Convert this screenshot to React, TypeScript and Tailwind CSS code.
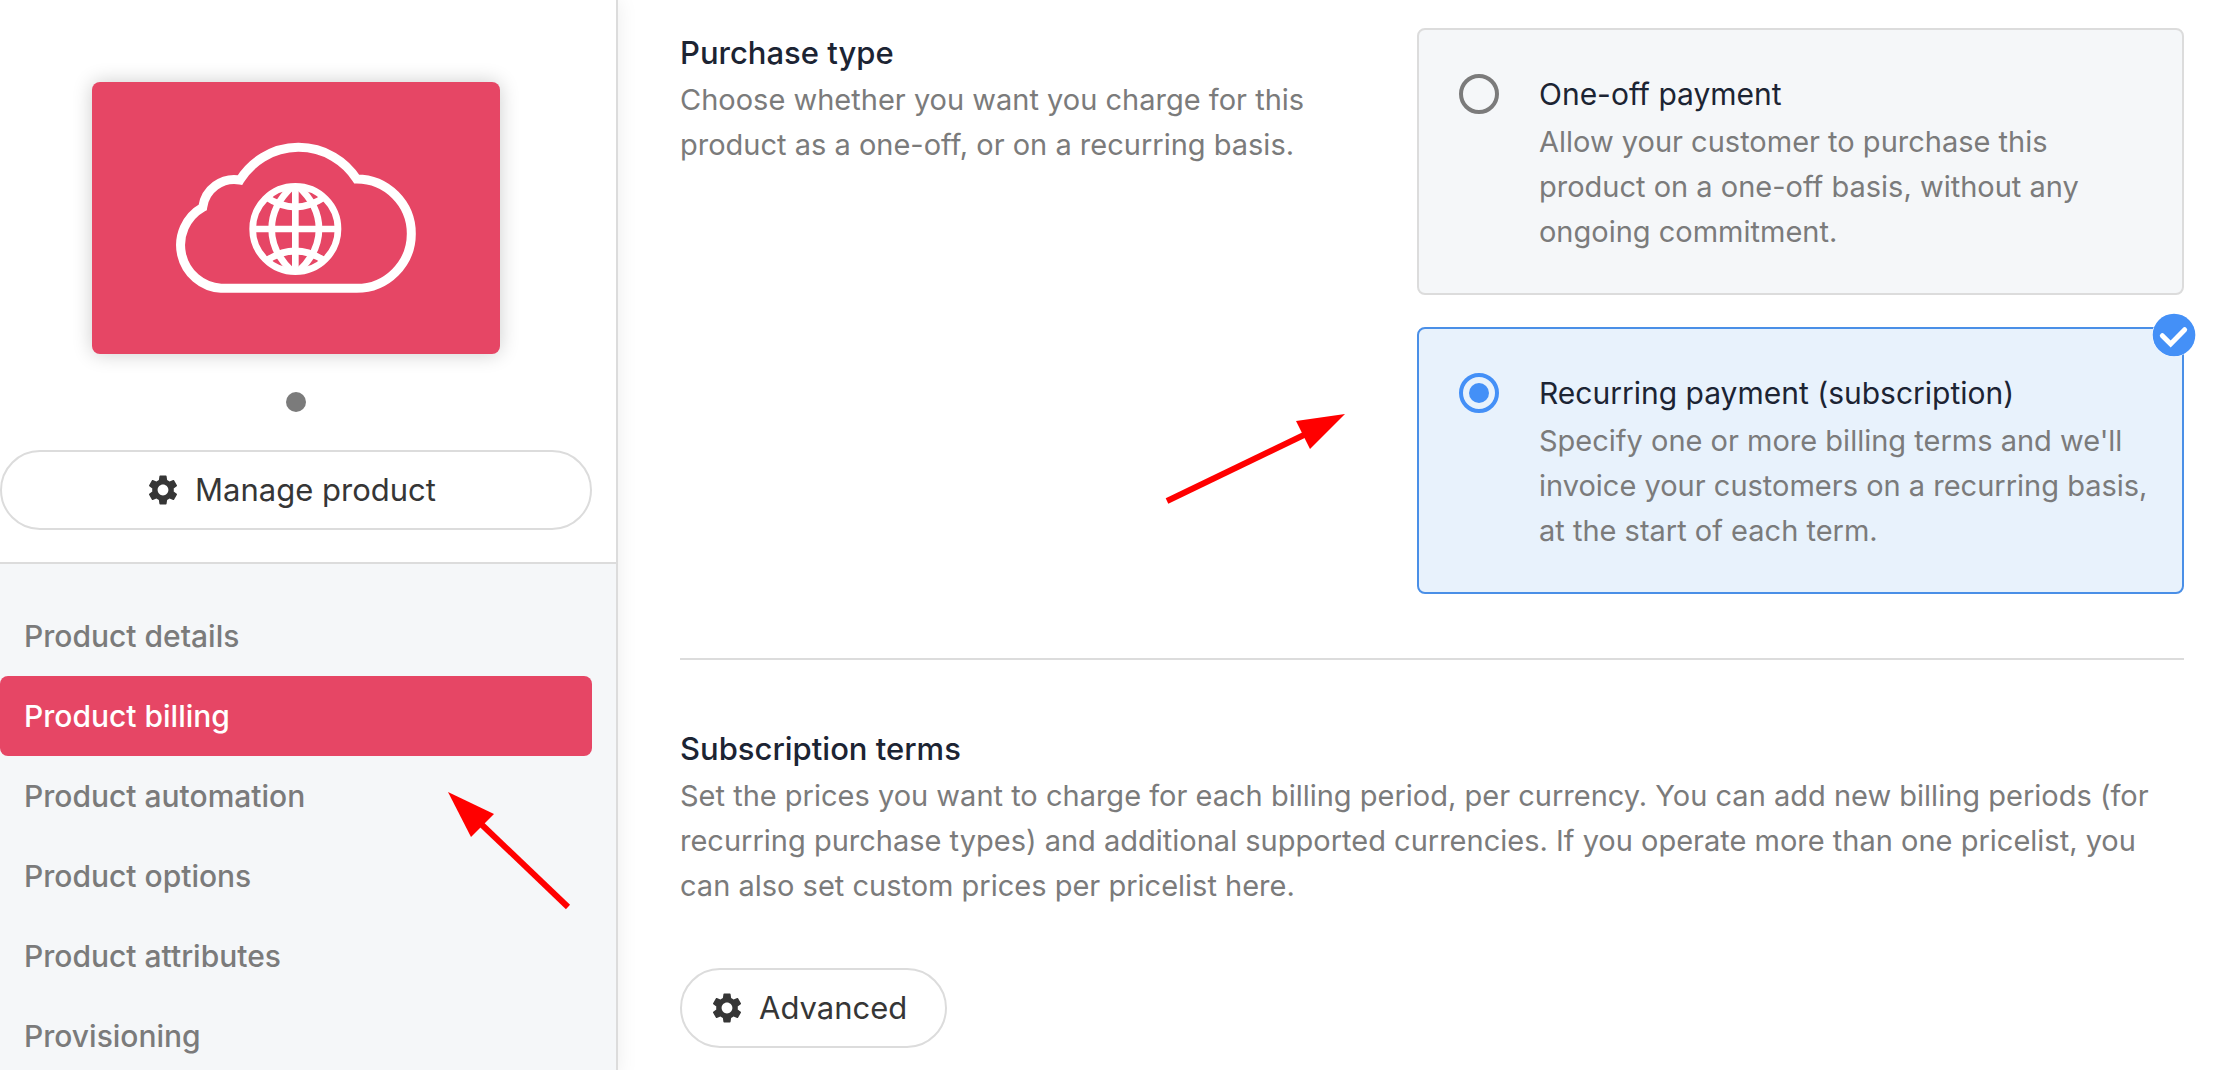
import { useState } from "react";
import { MdSettings } from "react-icons/md";

const NAV_ITEMS = [
  "Product details",
  "Product billing",
  "Product automation",
  "Product options",
  "Product attributes",
  "Provisioning",
];

const PURCHASE_TYPES = [
  {
    id: "one-off",
    title: "One-off payment",
    text: "Allow your customer to purchase this product on a one-off basis, without any ongoing commitment.",
  },
  {
    id: "recurring",
    title: "Recurring payment (subscription)",
    text: "Specify one or more billing terms and we'll invoice your customers on a recurring basis, at the start of each term.",
  },
];

function CloudGlobe() {
  return (
    <svg viewBox="5 3 780 525" className="h-[175px] w-[260px]" fill="none" stroke="white" aria-hidden="true">
      <path
        strokeWidth="27"
        d="M170 475H577A164 164 0 0 0 577 147A207 207 0 0 0 227 150A96 96 0 0 0 115 232A130 130 0 0 0 170 475Z"
      />
      <g strokeWidth="20">
        <circle cx="393" cy="297" r="128" />
        <path d="M393 169V425M265 297H521" />
        <path d="M385 169C301 245 301 349 385 425M401 169C485 245 485 349 401 425" />
        <path d="M306 202Q393 260 480 202M306 392Q393 334 480 392" />
      </g>
    </svg>
  );
}

function CheckBadge() {
  return (
    <svg viewBox="0 0 132 132" className="absolute -right-[14px] -top-[16px] size-11 rounded-full" aria-hidden="true">
      <circle cx="66" cy="66" r="66" fill="white" />
      <circle cx="66" cy="66" r="64" fill="#4490f7" />
      <path d="M31 68L56 93L98 50" fill="none" stroke="white" strokeWidth="15" strokeLinecap="round" strokeLinejoin="miter" />
    </svg>
  );
}

function GearButton({ label, className }: { label: string; className?: string }) {
  return (
    <button
      type="button"
      className={
        "flex h-20 items-center justify-center gap-[14px] rounded-full border-2 border-[#dcdcdc] bg-white pl-[27px] pr-[38px] text-[31px] text-[#363636] " +
        (className ?? "")
      }
    >
      <MdSettings className="size-9" />
      {label}
    </button>
  );
}

function SectionText({ title, text }: { title: string; text: string }) {
  return (
    <>
      <h2 className="text-[31px] font-medium leading-[45px] text-[#1c2433]">{title}</h2>
      <p className="mt-[2px] text-[29px] leading-[45px] text-[#7b7b7b]">{text}</p>
    </>
  );
}

export default function App() {
  const [selected, setSelected] = useState("recurring");
  const [active, setActive] = useState("Product billing");

  return (
    <div className="relative flex min-h-screen bg-white font-['Inter',sans-serif]">
      <aside className="flex w-[618px] shrink-0 flex-col border-r-2 border-[#dcdcdc] bg-[#f5f7f9] shadow-[0_0_20px_rgba(0,0,0,0.08)]">
        <div className="border-b-2 border-[#dcdcdc] bg-white pb-8 pr-6 pt-[82px]">
          <div className="mx-auto flex h-[272px] w-[408px] items-center justify-center rounded-lg bg-[#e64665] shadow-[0_0_20px_rgba(0,0,0,0.2)]">
            <CloudGlobe />
          </div>
          <div className="mx-auto my-[38px] size-5 rounded-full bg-[#7b7b7b]" />
          <GearButton label="Manage product" className="w-full" />
        </div>
        <nav className="pr-6 pt-8">
          {NAV_ITEMS.map((item) => (
            <a
              key={item}
              href="#"
              onClick={() => setActive(item)}
              className={
                item === active
                  ? "flex h-20 items-center rounded-lg bg-[#e64665] px-6 text-[30px] font-medium text-white"
                  : "flex h-20 items-center rounded-lg px-6 text-[30px] font-medium text-[#7b7b7b]"
              }
            >
              {item}
            </a>
          ))}
        </nav>
      </aside>

      <main className="min-w-0 flex-1 pl-[62px] pr-[34px] pt-7">
        <section className="flex border-b-2 border-[#dcdcdc] pb-16">
          <div className="flex-1 pr-24 pt-[2px]">
            <SectionText
              title="Purchase type"
              text="Choose whether you want you charge for this product as a one-off, or on a recurring basis."
            />
          </div>
          <div className="flex w-[51%] flex-col gap-8">
            {PURCHASE_TYPES.map(({ id, title, text }) => {
              const on = id === selected;
              return (
                <label
                  key={id}
                  className={
                    on
                      ? "relative flex items-start gap-10 rounded-lg border-2 border-[#4a8fe7] bg-[#e8f2fc] pb-[39px] pl-10 pr-6 pt-[42px]"
                      : "relative flex items-start gap-10 rounded-lg border-2 border-[#dcdcdc] bg-[#f5f7f9] pb-[39px] pl-10 pr-6 pt-[42px]"
                  }
                >
                  <input
                    type="radio"
                    name="purchase-type"
                    checked={on}
                    onChange={() => setSelected(id)}
                    className="mt-[2px] flex size-10 shrink-0 appearance-none items-center justify-center rounded-full border-4 border-[#7b7b7b] before:size-5 before:rounded-full checked:border-[#4490f7] checked:before:bg-[#4490f7]"
                  />
                  <span className="block">
                    <span className="block text-[30px] leading-[45px] text-[#1c2433]">{title}</span>
                    <span className="mt-[2px] block text-[29px] leading-[45px] text-[#7b7b7b]">{text}</span>
                  </span>
                  {on && <CheckBadge />}
                </label>
              );
            })}
          </div>
        </section>

        <section className="pb-5 pt-[66px]">
          <SectionText
            title="Subscription terms"
            text="Set the prices you want to charge for each billing period, per currency. You can add new billing periods (for recurring purchase types) and additional supported currencies. If you operate more than one pricelist, you can also set custom prices per pricelist here."
          />
          <GearButton label="Advanced" className="mt-[60px]" />
        </section>
      </main>

      {/* Annotation arrows drawn over the page */}
      <svg className="pointer-events-none absolute left-[440px] top-[784px] h-[136px] w-[140px]" viewBox="440 784 140 136" aria-hidden="true">
        <path d="M568 907L480 823" stroke="#ff0000" strokeWidth="6" />
        <path d="M448 792L494 814L471 837Z" fill="#ff0000" />
      </svg>
      <svg className="pointer-events-none absolute left-[1160px] top-[404px] h-[106px] w-[194px]" viewBox="1160 404 194 106" aria-hidden="true">
        <path d="M1167 501L1306 434" stroke="#ff0000" strokeWidth="6" />
        <path d="M1345 414L1296 421L1310 449Z" fill="#ff0000" />
      </svg>
    </div>
  );
}
